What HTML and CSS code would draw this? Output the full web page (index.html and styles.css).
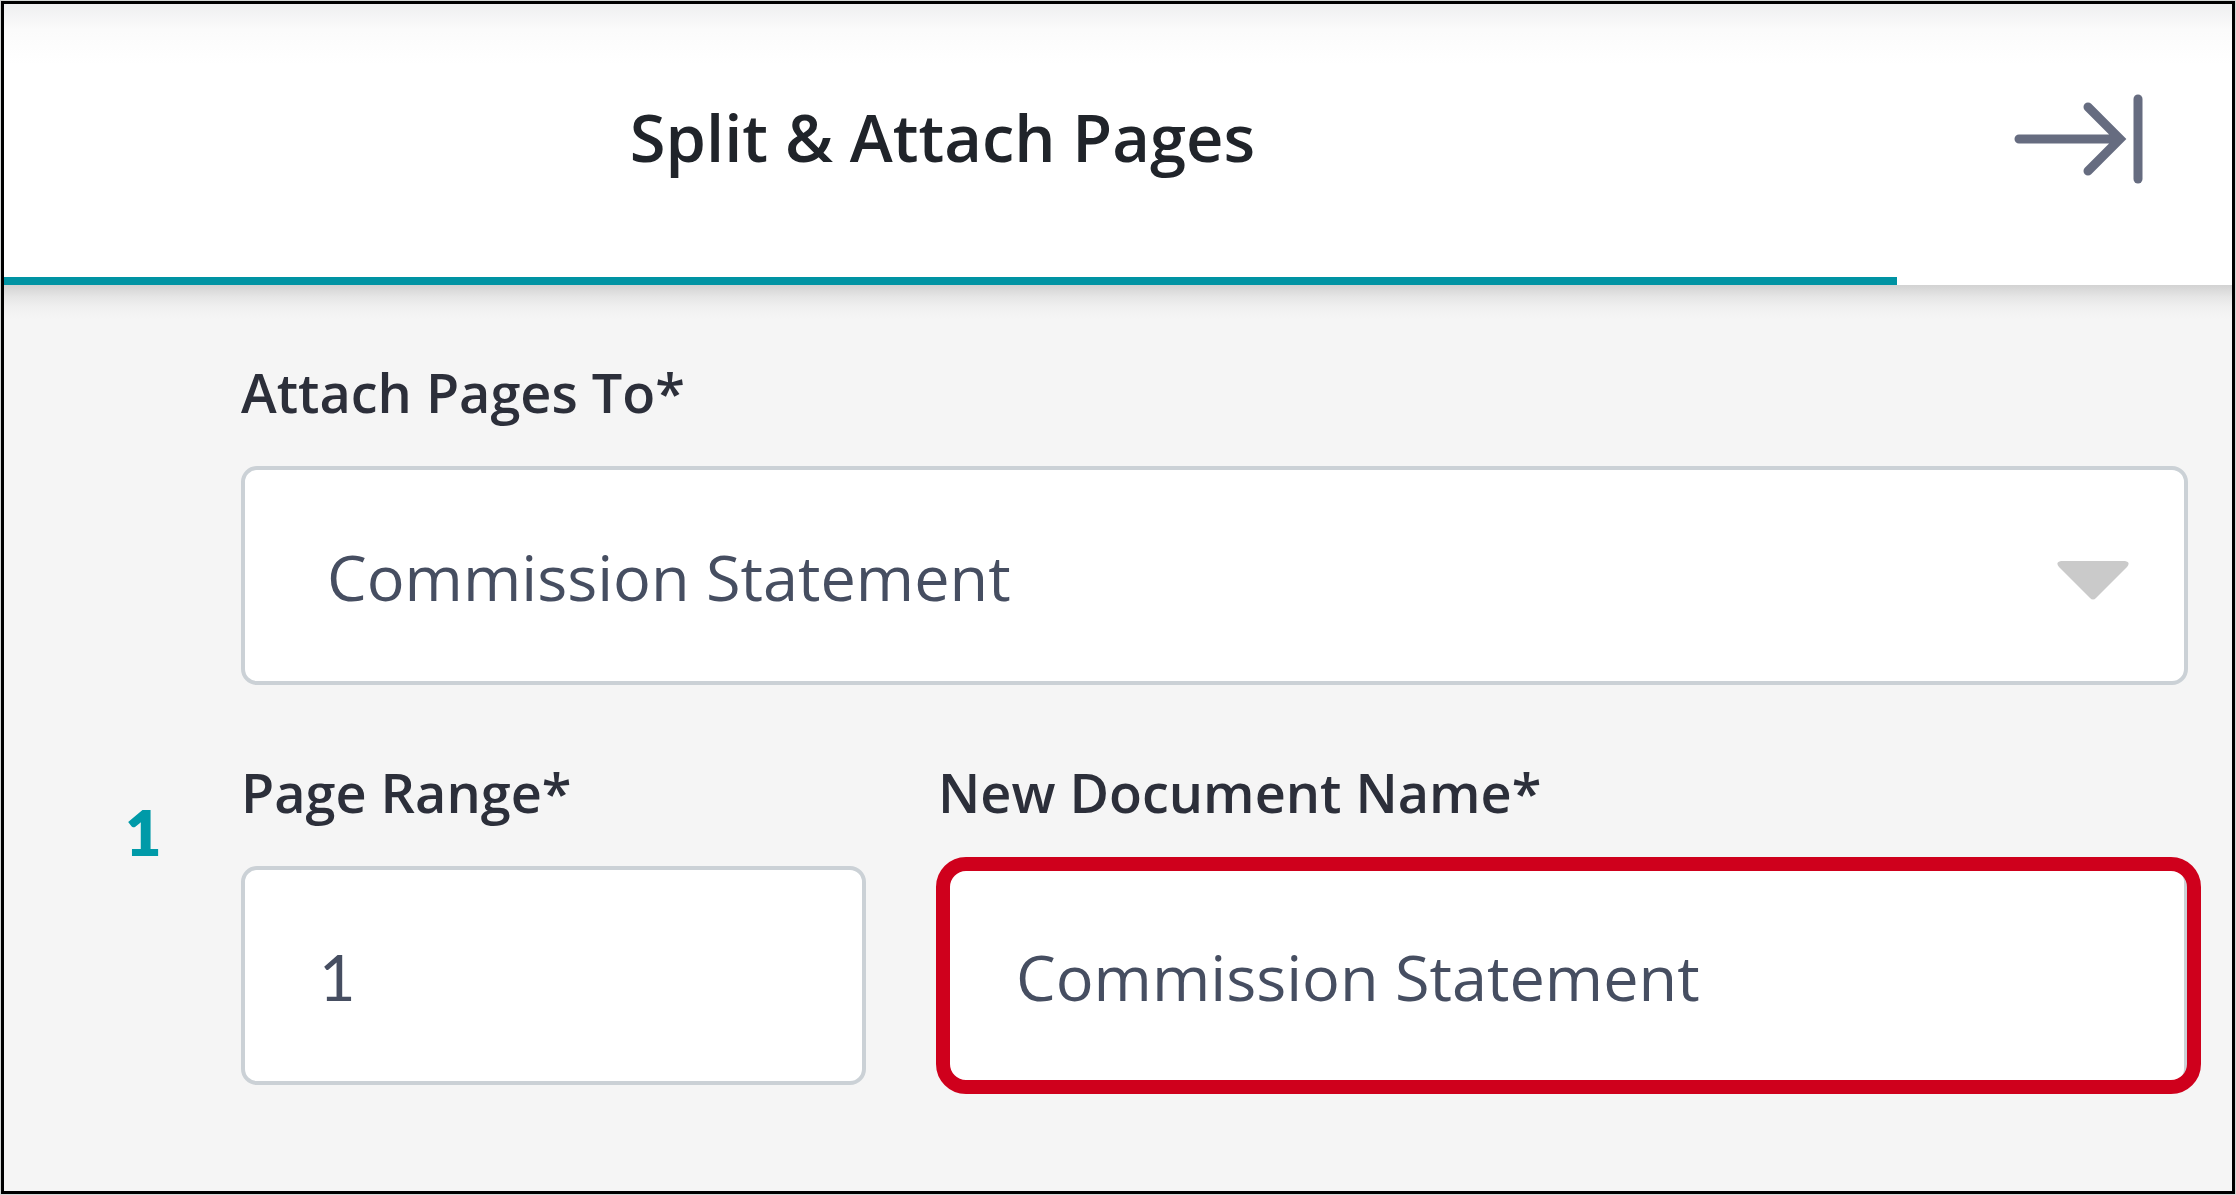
FILE: index.html
```html
<!DOCTYPE html>
<html lang="en">
<head>
    <meta charset="utf-8">
    <title>Split &amp; Attach Pages</title>
    <link rel="stylesheet" href="styles.css">
</head>
<body>
    <div class="panel">
        <header class="panel-header">
            <h1 class="tab">Split &amp; Attach Pages</h1>
            <button class="collapse" type="button" aria-label="Collapse panel">
                <svg width="136" height="100" viewBox="0 0 136 100" fill="none" stroke="#666c80" stroke-width="9" stroke-linecap="round">
                    <path d="M9 50H108M78 18L110 50L78 82"/>
                    <path d="M128 10V90"/>
                </svg>
            </button>
        </header>

        <form class="split-form">
            <div class="field attach-to">
                <label for="attachTo">Attach Pages To*</label>
                <div class="select-wrap">
                    <select id="attachTo">
                        <option>Commission Statement</option>
                    </select>
                    <svg class="arrow" width="72" height="40" viewBox="0 0 72 40">
                        <path d="M4 0H68Q74 1 70 6L39 37Q36 40 33 37L2 6Q-2 1 4 0Z" fill="#cacaca"/>
                    </svg>
                </div>
            </div>

            <span class="row-number">1</span>
            <div class="field">
                <label for="pageRange">Page Range*</label>
                <input type="text" class="range" id="pageRange" value="1">
            </div>
            <div class="field">
                <label for="docName">New Document Name*</label>
                <div class="highlight">
                    <input type="text" id="docName" value="Commission Statement">
                </div>
            </div>
        </form>
    </div>
</body>
</html>
```
FILE: styles.css
```css
* {
    margin: 0;
    padding: 0;
    box-sizing: border-box;
}
body {
    padding: 1px;
    background: #d5d8d7;
    color: #2c2f3a;
    font-family: "Open Sans", sans-serif;
}
.panel {
    min-height: calc(100vh - 2px);
    border: 3px solid #000;
    background: #f5f5f5;
}
.panel-header {
    display: flex;
    height: 281px;
    background: linear-gradient(#eeeff0, #fbfbfb 26px, #fff 60px);
}
.tab {
    flex: 1;
    padding-right: 16px;
    border-bottom: 8px solid #0093a3;
    color: #20242a;
    font-size: 65px;
    font-weight: 600;
    line-height: 266px;
    text-align: center;
}
.collapse {
    display: flex;
    align-items: center;
    justify-content: flex-end;
    width: 335px;
    padding-right: 86px;
    padding-bottom: 12px;
    border: none;
    background: none;
    cursor: pointer;
}
.split-form {
    display: grid;
    grid-template-columns: 44px 1fr 2fr;
    gap: 75px 72px;
    padding: 75px 44px 75px 121px;
    /* shadow cast by the header */
    background: linear-gradient(#d2d2d2, #e6e6e6 12px, #f0f0f0 22px, #f5f5f5 34px);
}
.field {
    display: flex;
    flex-direction: column;
    gap: 42px;
}
.attach-to {
    grid-column: 2 / 4;
}
label {
    font-size: 54px;
    font-weight: 600;
    line-height: 64px;
}
input, select {
    display: block;
    width: 100%;
    height: 219px;
    padding: 2px 74px 0;
    border: 4px solid #cbd1d6;
    border-radius: 16px;
    background: #fff;
    color: #464e61;
    font-family: inherit;
    font-size: 63px;
}
select {
    appearance: none;
    padding: 2px 160px 0 82px;
}
.range, .row-number {
    font-family: Lato, sans-serif;
}
.select-wrap, .highlight {
    position: relative;
}
.arrow {
    position: absolute;
    top: 95px;
    right: 59px;
    pointer-events: none;
}
/* red frame round the field to fill in */
.highlight::after {
    content: "";
    position: absolute;
    inset: -9px -13px -9px -2px;
    border: 14px solid #cf001c;
    border-radius: 30px;
    pointer-events: none;
}
.row-number {
    margin-top: 36px;
    color: #009aa8;
    font-size: 63px;
    font-weight: 800;
    line-height: 72px;
}
```
